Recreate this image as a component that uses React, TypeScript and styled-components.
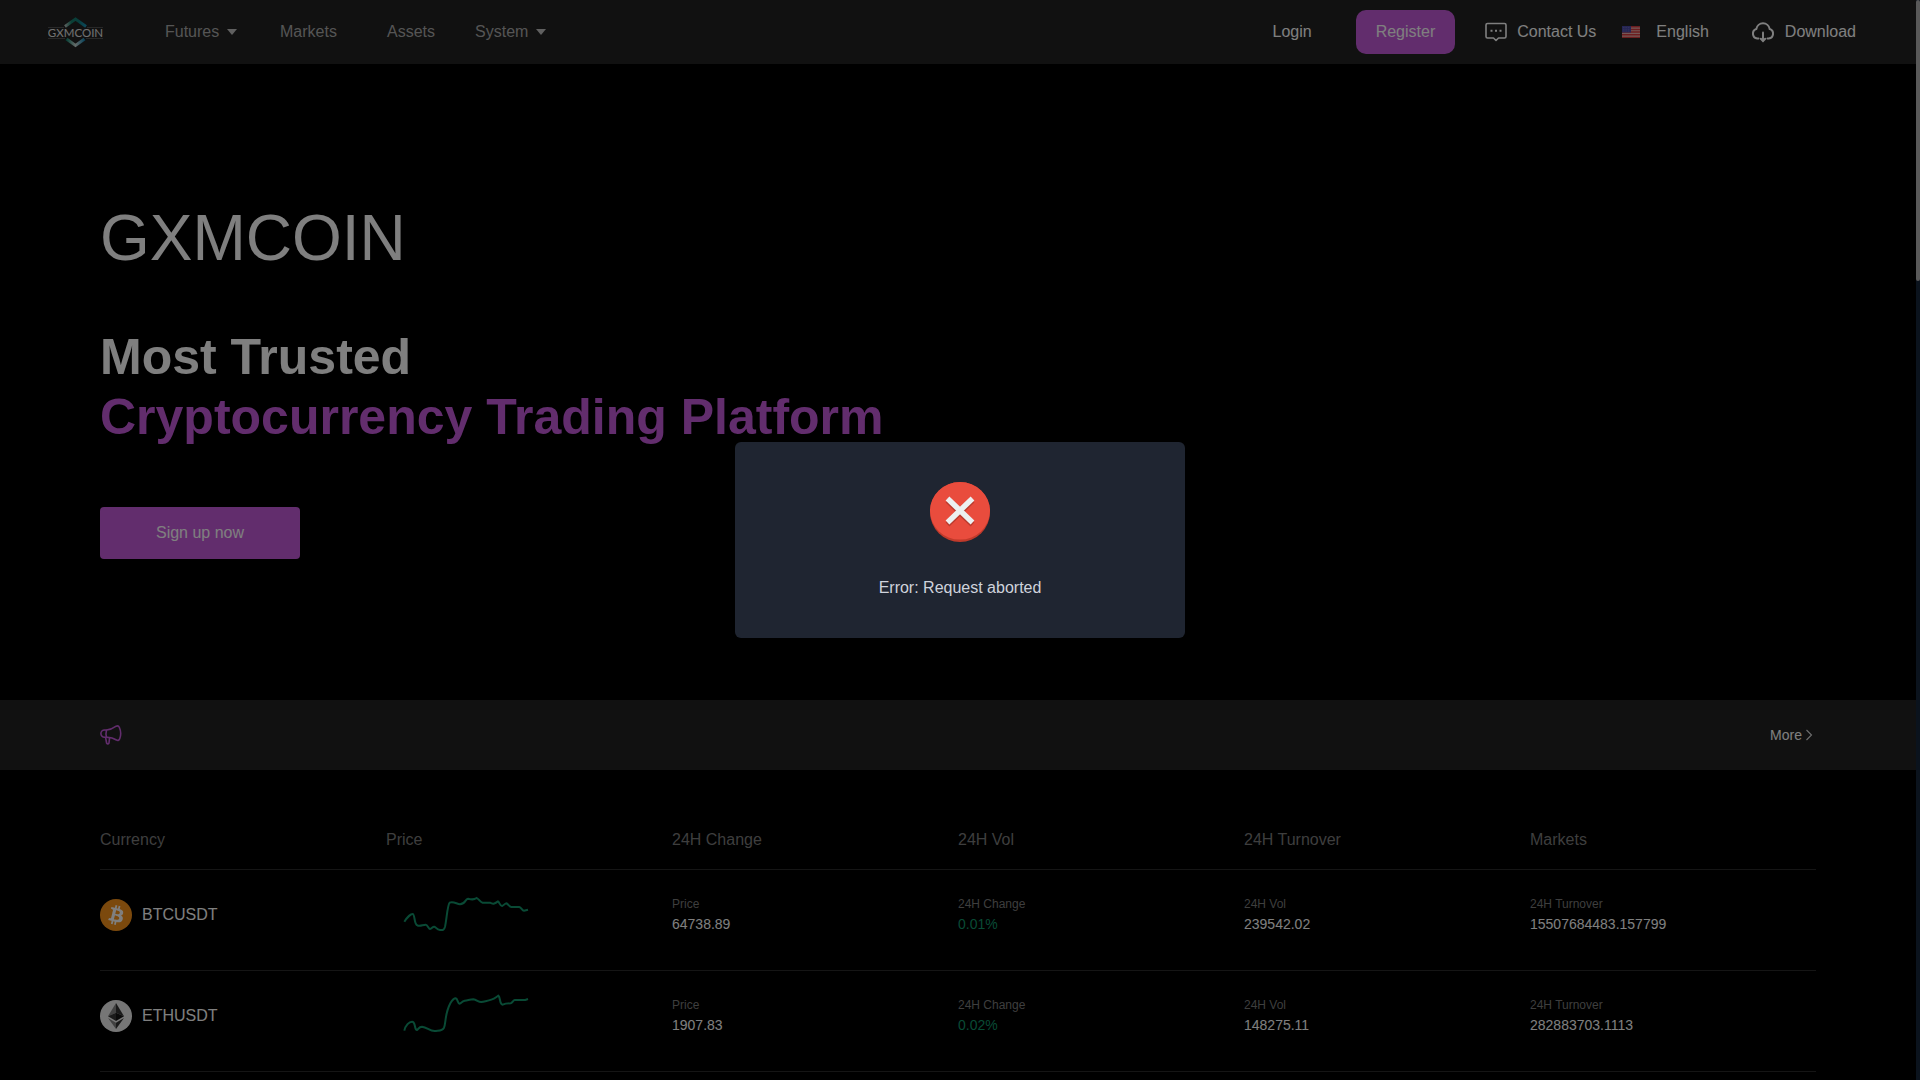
import React from "react";
import styled, { createGlobalStyle } from "styled-components";

const PURPLE = "#c55adb";
const GREEN = "#12946a";

const GlobalStyle = createGlobalStyle`
  * { box-sizing: border-box; }
  body {
    margin: 0;
    background: #000;
    color: #fff;
    font: 16px/20px "Liberation Sans", Arial, sans-serif;
  }
  button { font: inherit; color: inherit; border: 0; padding: 0; background: none; cursor: pointer; }
  a { color: inherit; text-decoration: none; }
  svg { display: block; flex: none; }
`;

const Shell = styled.div`
  display: flex;
  height: 100vh;
  overflow: hidden;
`;
const Page = styled.div`
  flex: 1;
  min-width: 0;
`;
const ScrollRail = styled.div`
  width: 4px;
  background: #17263a;
`;
const ScrollThumb = styled.div`
  height: 26%;
  border-radius: 2px;
  background: #b2b2b2;
`;

const TopBar = styled.header`
  display: flex;
  align-items: center;
  justify-content: space-between;
  height: 64px;
  padding: 0 60px 0 48px;
  background: #222;
`;
const BarGroup = styled.div`
  display: flex;
  align-items: center;
`;
const MainNav = styled.nav`
  display: flex;
  gap: 40px;
  margin-left: 61px;
  color: #aaa;
`;
const NavLink = styled.a<{ $minWidth?: number }>`
  display: flex;
  align-items: center;
  gap: 8px;
  min-width: ${(p) => p.$minWidth ?? 0}px;
`;
const BarButton = styled.button<{ $before: number; $gap?: number }>`
  display: flex;
  align-items: center;
  gap: ${(p) => p.$gap ?? 10}px;
  margin-left: ${(p) => p.$before}px;
`;
const RegisterButton = styled.button`
  height: 44px;
  margin-left: 44px;
  padding: 0 20px;
  border-radius: 10px;
  background: ${PURPLE};
`;

const Hero = styled.section`
  height: 636px;
  padding: 136px 100px 0;
`;
const Brand = styled.h1`
  margin: 0 0 51px;
  font-size: 64px;
  line-height: 76px;
  font-weight: 400;
`;
const Slogan = styled.h2`
  margin: 0 0 60px;
  font-size: 50px;
  line-height: 60px;
  font-weight: 700;
`;
const SloganAccent = styled.span`
  display: block;
  color: ${PURPLE};
`;
const SignUpButton = styled.button`
  width: 200px;
  height: 52px;
  border-radius: 4px;
  background: ${PURPLE};
`;

const NoticeBar = styled.section`
  display: flex;
  align-items: center;
  justify-content: space-between;
  height: 70px;
  padding: 0 100px;
  background: #222;
`;
const MoreLink = styled.a`
  display: flex;
  align-items: center;
  font-size: 14px;
`;

const MarketSection = styled.section`
  padding: 40px 100px 0;
`;
const MarketTable = styled.table`
  width: 100%;
  table-layout: fixed;
  border-collapse: separate;
  border-spacing: 0;
  text-align: left;
`;
const HeadCell = styled.th`
  height: 60px;
  padding: 0;
  border-bottom: 1px solid #2a2a2a;
  color: #7c7c7c;
  font-weight: 400;
`;
const Cell = styled.td`
  height: 101px;
  padding: 0 0 12px;
  border-bottom: 1px solid #2a2a2a;
`;
const Pair = styled.div`
  display: flex;
  align-items: center;
  gap: 10px;
  padding-top: 2px;
`;
const Spark = styled.svg`
  width: 130px;
  height: 44px;
  margin-left: 14px;
`;
const Label = styled.div`
  color: #7c7c7c;
  font-size: 12px;
  line-height: 20px;
`;
const Value = styled.div<{ $up?: boolean }>`
  color: ${(p) => (p.$up ? GREEN : "#fff")};
  font-size: 14px;
  line-height: 20px;
`;

const Mask = styled.div`
  position: fixed;
  inset: 0;
  display: flex;
  align-items: center;
  justify-content: center;
  background: rgba(0, 0, 0, 0.5);
`;
const Dialog = styled.div`
  display: flex;
  flex-direction: column;
  align-items: center;
  gap: 36px;
  width: 450px;
  padding: 40px;
  border-radius: 6px;
  background: #1f2531;
  color: #cfd3dc;
`;
const Message = styled.p`
  margin: 0;
`;

const Logo = () => (
  <svg width="56" height="32" viewBox="0 0 56 32" role="img" aria-label="GXMCOIN">
    <defs>
      <linearGradient id="roof" x1="0" x2="1">
        <stop offset="0" stopColor="#b9c4c0" />
        <stop offset="0.3" stopColor="#16806c" />
        <stop offset="0.65" stopColor="#127a78" />
        <stop offset="1" stopColor="#1792b8" />
      </linearGradient>
      <linearGradient id="base" x1="0" x2="1">
        <stop offset="0" stopColor="#12836f" />
        <stop offset="0.5" stopColor="#c9d6d2" />
        <stop offset="1" stopColor="#1487b4" />
      </linearGradient>
    </defs>
    <path d="M17 10.500 27.500 3 38 10.500" fill="none" stroke="url(#roof)" strokeWidth="3" />
    <path d="M18.500 23 27.500 29.500 36.500 23" fill="none" stroke="url(#base)" strokeWidth="3" />
    <path d="M0 11.500H16M39 11.500H55M0 22.500H17M38 22.500H55" stroke="#666" strokeWidth="0.700" />
    <text x="27.500" y="21" textAnchor="middle" fontFamily="Lato, sans-serif" fontSize="11.500" fill="#e4e4e4">
      GXMCOIN
    </text>
  </svg>
);

const Caret = () => (
  <svg width="10" height="6" viewBox="0 0 10 6">
    <path d="M0 0H10L5 6Z" fill="#c0c0c0" />
  </svg>
);

const ChatIcon = () => (
  <svg width="22" height="20" viewBox="0 0 22 20" fill="none" stroke="#fff" strokeWidth="1.600" strokeLinejoin="round">
    <path d="M2.500 1.500H19.500Q21 1.500 21 3V14.500Q21 16 19.500 16H13.500L11 18.500 8.500 16H2.500Q1 16 1 14.500V3Q1 1.500 2.500 1.500Z" />
    <path d="M5.500 8.800h2M10 8.800h2M14.500 8.800h2" strokeWidth="2" />
  </svg>
);

const FlagIcon = () => (
  <svg width="18" height="12" viewBox="0 0 18 12">
    <rect width="18" height="12" fill="#e8b0ae" />
    <path d="M0 .7H18M0 3.400H18M0 6.100H18M0 8.800H18M0 11.400H18" stroke="#d83a3e" strokeWidth="1.500" />
    <rect width="9" height="6.500" fill="#4a4aa8" />
    <path d="M1 1.500H8M1 3.300H8M1 5H8" stroke="#8f8fc8" strokeWidth="0.600" strokeDasharray="0.700 1" />
  </svg>
);

const CloudIcon = () => (
  <svg width="24" height="22" viewBox="0 0 24 22" fill="none" stroke="#fff" strokeWidth="2" strokeLinecap="round">
    <path d="M7.500 17.500H6.200A4.900 4.900 0 0 1 5.300 8 6.800 6.800 0 0 1 18.700 8 4.900 4.900 0 0 1 17.800 17.500H16.500" />
    <path d="M12 11.500V19.500" />
    <path d="M9.800 17.800 12 20 14.200 17.800" />
  </svg>
);

const HornIcon = () => (
  <svg width="22" height="22" viewBox="0 0 22 22" fill="none" stroke={PURPLE} strokeWidth="1.600" strokeLinejoin="round">
    <path d="M6.500 6C10.500 5.800 13 4.500 16.200 2.200Q18.400 1.300 19.400 3.500 21.800 9 19.800 14.500 18.800 17.200 16.500 16 12.500 13.200 6.500 13.200" />
    <path d="M6.500 6H4.500A3.600 3.600 0 0 0 4.500 13.200H6.500Q5.500 9.600 6.500 6Z" />
    <path d="M5.500 13.200 6.600 19Q7.800 20.800 9 19L9.600 13.500" />
  </svg>
);

const ChevronIcon = () => (
  <svg width="14" height="14" viewBox="0 0 14 14" fill="none" stroke="#ddd" strokeWidth="1.100">
    <path d="M4.500 2 9.500 7 4.500 12" />
  </svg>
);

const BitcoinIcon = () => (
  <svg width="32" height="32" viewBox="0 0 32 32">
    <circle cx="16" cy="16" r="16" fill="#f7931a" />
    <path
      fill="#fff"
      d="M23.189 14.020c.314-2.096-1.283-3.223-3.465-3.975l.708-2.840-1.728-.43-.690 2.765c-.454-.114-.920-.22-1.385-.326l.695-2.783L15.596 6l-.708 2.839c-.376-.086-.746-.17-1.104-.26l.002-.009-2.384-.595-.46 1.846s1.283.294 1.256.312c.7.175.826.638.805 1.006l-.806 3.235c.048.012.11.03.18.057l-.183-.045-1.130 4.532c-.086.212-.303.531-.793.410.018.025-1.256-.313-1.256-.313l-.858 1.978 2.250.561c.418.105.828.215 1.231.318l-.715 2.872 1.727.43.708-2.840c.472.127.930.245 1.378.357l-.706 2.828 1.728.43.715-2.866c2.948.558 5.164.333 6.097-2.333.752-2.146-.037-3.385-1.588-4.192 1.130-.26 1.980-1.003 2.207-2.538zm-3.950 5.538c-.533 2.147-4.148.986-5.320.695l.950-3.805c1.172.293 4.929.872 4.370 3.110zm.535-5.569c-.487 1.953-3.495.960-4.470.717l.860-3.450c.975.243 4.118.696 3.610 2.733z"
    />
  </svg>
);

const EtherIcon = () => (
  <svg width="32" height="32" viewBox="0 0 32 32">
    <circle cx="16" cy="16" r="16" fill="#ededed" />
    <path d="M16 3 8 16.300 16 12.700Z" fill="#828282" />
    <path d="M16 3 24 16.300 16 12.700Z" fill="#333" />
    <path d="M8 16.300 16 12.700V21Z" fill="#343434" />
    <path d="M24 16.300 16 12.700V21Z" fill="#141414" />
    <path d="M8 18 16 22.700V29Z" fill="#828282" />
    <path d="M24 18 16 22.700V29Z" fill="#343434" />
  </svg>
);

const ErrorIcon = () => (
  <svg width="60" height="60" viewBox="0 0 60 60">
    <circle cx="30" cy="30" r="30" fill="#c03a2b" />
    <path d="M30 0A30 28.800 0 0 1 30 57.600 30 28.800 0 0 1 30 0Z" fill="#e94c3d" />
    <path d="M17.500 18.500 42.500 42.500M42.500 18.500 17.500 42.500" stroke="#bb3b2e" strokeWidth="5.500" />
    <path d="M17.500 16.500 42.500 40.500M42.500 16.500 17.500 40.500" stroke="#ecf0f1" strokeWidth="5.500" />
  </svg>
);

const COLUMNS = ["Currency", "Price", "24H Change", "24H Vol", "24H Turnover", "Markets"];

const MARKETS = [
  {
    symbol: "BTCUSDT",
    icon: <BitcoinIcon />,
    price: "64738.89",
    change: "0.01%",
    volume: "239542.02",
    turnover: "15507684483.157799",
    viewBox: "60 36 390 132",
    trend:
      "M73 125C80 114 92 102 98 102 105 102 102 134 112 136 120 141 128 134 137 134 143 134 146 147 150 147 155 147 158 139 163 140 168 141 170 150 180 150 190 151 192 150 195 140 200 120 202 75 209 68 220 63 230 72 240 73 257 72 255 57 264 56 275 59 280 60 290 54 300 60 300 66 308 68L330 68C340 74 346 70 354 64 358 66 360 78 366 78 372 76 374 70 380 70 386 74 388 81 394 81L418 81C424 82 426 92 432 92L444 89",
  },
  {
    symbol: "ETHUSDT",
    icon: <EtherIcon />,
    price: "1907.83",
    change: "0.02%",
    volume: "148275.11",
    turnover: "282883703.1113",
    viewBox: "60 339 390 132",
    trend:
      "M73 452C76 436 88 425 96 425 108 425 102 450 111 450 116 448 116 440 126 440 142 442 148 453 164 453 176 451 186 454 192 443 198 430 194 402 211 370 217 360 222 355 227 355 234 357 232 370 239 371 246 370 244 364 254 362 264 361 270 358 280 358 290 359 296 367 304 366 316 363 324 363 334 359 344 356 350 350 355 347 362 352 358 374 368 374 376 370 384 370 392 370 398 368 400 360 404 360L436 360 444 357",
  },
];

export default function App() {
  return (
    <>
      <GlobalStyle />
      <Shell>
        <Page>
          <TopBar>
            <BarGroup>
              <a href="#home"><Logo /></a>
              <MainNav>
                <NavLink href="#futures" $minWidth={75}>Futures<Caret /></NavLink>
                <NavLink href="#markets" $minWidth={67}>Markets</NavLink>
                <NavLink href="#assets">Assets</NavLink>
                <NavLink href="#system">System<Caret /></NavLink>
              </MainNav>
            </BarGroup>
            <BarGroup>
              <BarButton type="button" $before={0}>Login</BarButton>
              <RegisterButton type="button">Register</RegisterButton>
              <BarButton type="button" $before={30}><ChatIcon />Contact Us</BarButton>
              <BarButton type="button" $before={26} $gap={16}><FlagIcon />English</BarButton>
              <BarButton type="button" $before={42}><CloudIcon />Download</BarButton>
            </BarGroup>
          </TopBar>
          <Hero>
            <Brand>GXMCOIN</Brand>
            <Slogan>
              Most Trusted
              <SloganAccent>Cryptocurrency Trading Platform</SloganAccent>
            </Slogan>
            <SignUpButton type="button">Sign up now</SignUpButton>
          </Hero>
          <NoticeBar>
            <HornIcon />
            <MoreLink href="#notices">More<ChevronIcon /></MoreLink>
          </NoticeBar>
          <MarketSection>
            <MarketTable>
              <thead>
                <tr>
                  {COLUMNS.map((name) => (
                    <HeadCell key={name} scope="col">{name}</HeadCell>
                  ))}
                </tr>
              </thead>
              <tbody>
                {MARKETS.map((m) => (
                  <tr key={m.symbol}>
                    <Cell><Pair>{m.icon}{m.symbol}</Pair></Cell>
                    <Cell>
                      <Spark viewBox={m.viewBox}>
                        <path d={m.trend} fill="none" stroke={GREEN} strokeWidth="6" />
                      </Spark>
                    </Cell>
                    <Cell><Label>Price</Label><Value>{m.price}</Value></Cell>
                    <Cell><Label>24H Change</Label><Value $up>{m.change}</Value></Cell>
                    <Cell><Label>24H Vol</Label><Value>{m.volume}</Value></Cell>
                    <Cell><Label>24H Turnover</Label><Value>{m.turnover}</Value></Cell>
                  </tr>
                ))}
              </tbody>
            </MarketTable>
          </MarketSection>
        </Page>
        <ScrollRail><ScrollThumb /></ScrollRail>
      </Shell>
      <Mask>
        <Dialog role="alertdialog" aria-modal="true" aria-describedby="dialog-message">
          <ErrorIcon />
          <Message id="dialog-message">Error: Request aborted</Message>
        </Dialog>
      </Mask>
    </>
  );
}
